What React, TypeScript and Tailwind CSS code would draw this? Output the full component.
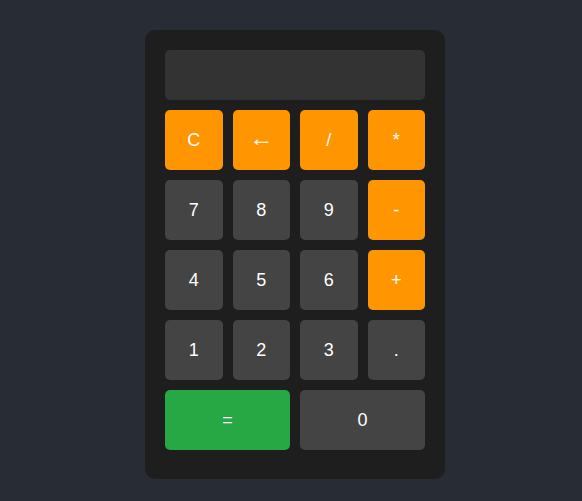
const keys: { label: string; kind: 'op' | 'num' | 'eq'; wide?: boolean }[] = [
  { label: 'C', kind: 'op' },
  { label: '←', kind: 'op' },
  { label: '/', kind: 'op' },
  { label: '*', kind: 'op' },
  { label: '7', kind: 'num' },
  { label: '8', kind: 'num' },
  { label: '9', kind: 'num' },
  { label: '-', kind: 'op' },
  { label: '4', kind: 'num' },
  { label: '5', kind: 'num' },
  { label: '6', kind: 'num' },
  { label: '+', kind: 'op' },
  { label: '1', kind: 'num' },
  { label: '2', kind: 'num' },
  { label: '3', kind: 'num' },
  { label: '.', kind: 'num' },
  { label: '=', kind: 'eq', wide: true },
  { label: '0', kind: 'num', wide: true },
];

const colors = {
  op: 'bg-[#ff9500]',
  num: 'bg-[#444444]',
  eq: 'bg-[#28a745]',
};

export default function App() {
  return (
    <div
      className="min-h-[501px] bg-[#282c34] pt-[30px] pl-[145px]"
      style={{ fontFamily: '"Liberation Sans", Arial, sans-serif' }}
    >
      <div className="w-[300px] h-[449px] rounded-[10px] bg-[#1e1e1e] p-5">
        <div className="h-[50px] rounded-[5px] bg-[#333333] mb-[10px]" />
        <div className="grid grid-cols-4 gap-[10px]">
          {keys.map((k) => (
            <button
              key={k.label}
              className={`${colors[k.kind]} ${k.wide ? 'col-span-2' : ''} h-[60px] rounded-[5px] text-white text-[18px] flex items-center justify-center`}
            >
              {k.label === '←' ? (
                <span className="text-[24px] leading-none -mt-[4px]">←</span>
              ) : (
                k.label
              )}
            </button>
          ))}
        </div>
      </div>
    </div>
  );
}
